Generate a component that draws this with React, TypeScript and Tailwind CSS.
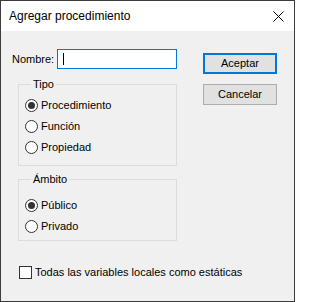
import React from "react";

function Radio({ label, checked }: { label: string; checked?: boolean }) {
  return (
    <div className="flex h-[21px] items-center gap-[3px]">
      <span className="flex h-[13px] w-[13px] items-center justify-center rounded-full border border-[#333333] bg-white">
        {checked && <span className="h-[7px] w-[7px] rounded-full bg-[#333333]" />}
      </span>
      <span>{label}</span>
    </div>
  );
}

export default function App() {
  return (
    <div className="flex h-[302px] w-[295px] flex-col border border-[#3c3c3c] bg-[#f0f0f0] font-['Liberation_Sans',Arial,sans-serif] text-[11px] text-black">
      {/* Title bar */}
      <div className="flex h-[30px] items-center justify-between bg-white pl-[8px] pr-[9px]">
        <span className="text-[12px]">Agregar procedimiento</span>
        <svg width="11" height="11" viewBox="0 0 11 11" className="mr-[1px]">
          <path d="M0.5 0.5 L10.5 10.5 M10.5 0.5 L0.5 10.5" stroke="#000" strokeWidth="1" fill="none" />
        </svg>
      </div>

      {/* Body */}
      <div className="flex flex-1 pl-[11px]">
        <div className="flex w-[165px] flex-col">
          <div className="mt-[18px] flex items-center justify-between">
            <span>Nombre:</span>
            <div className="flex h-[20px] w-[120px] items-center border border-[#0078d7] bg-white pl-[5px]">
              <span className="h-[12px] w-px bg-black" />
            </div>
          </div>

          <fieldset className="ml-[6px] mt-[9px] border border-[#dcdcdc] pb-[7px] pl-[6px] pt-[4px]">
            <legend className="ml-[6px] px-[2px] leading-[13px]">Tipo</legend>
            <Radio label="Procedimiento" checked />
            <Radio label="Función" />
            <Radio label="Propiedad" />
          </fieldset>

          <fieldset className="ml-[6px] mt-[7px] border border-[#dcdcdc] pb-[3px] pl-[6px] pt-[9px]">
            <legend className="ml-[6px] px-[2px] leading-[13px]">Ámbito</legend>
            <Radio label="Público" checked />
            <Radio label="Privado" />
          </fieldset>

          <div className="ml-[7px] mt-[23px] flex items-center gap-[3px] whitespace-nowrap">
            <span className="h-[13px] w-[13px] shrink-0 border border-[#333333] bg-white" />
            <span>Todas las variables locales como estáticas</span>
          </div>
        </div>

        <div className="ml-[26px] flex flex-col gap-[10px] pt-[22px]">
          <button className="h-[21px] w-[74px] border-2 border-[#0078d7] bg-[#e1e1e1]">Aceptar</button>
          <button className="h-[21px] w-[74px] border border-[#adadad] bg-[#e1e1e1]">Cancelar</button>
        </div>
      </div>
    </div>
  );
}
